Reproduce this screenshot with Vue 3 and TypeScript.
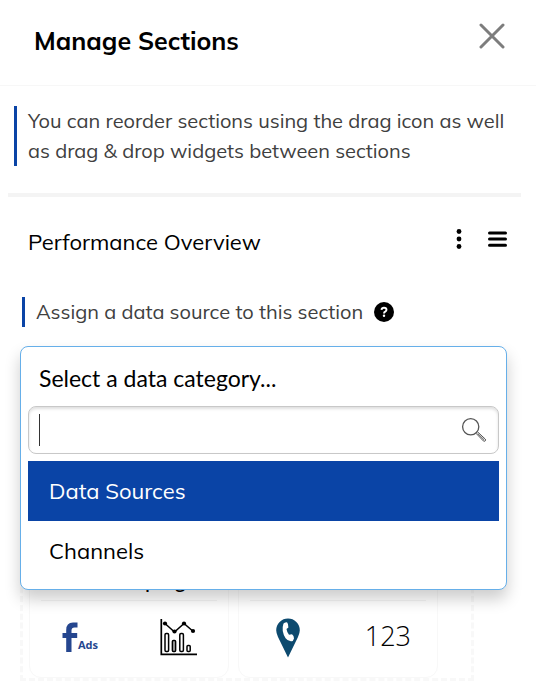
<script setup lang="ts">
import { ref } from 'vue'

interface Option {
  id: string
  label: string
}

const options: Option[] = [
  { id: 'sources', label: 'Data Sources' },
  { id: 'channels', label: 'Channels' },
]

const active = ref('sources')
const query = ref('')
</script>

<template>
  <main class="page">
    <header class="header">
      <h1>Manage Sections</h1>
      <button class="icon-button" type="button" aria-label="Close">
        <svg width="26" height="26" viewBox="0 0 26 26">
          <path d="M2 2 24 24M24 2 2 24" fill="none" stroke="#7d7d7d" stroke-width="3" stroke-linecap="round" />
        </svg>
      </button>
    </header>

    <div class="content">
      <p class="note">You can reorder sections using the drag icon as well as drag &amp; drop widgets between sections</p>

      <section class="section">
        <div class="section-head">
          <h2>Performance Overview</h2>
          <div class="tools">
            <button class="icon-button" type="button" aria-label="More">
              <svg width="6" height="22" viewBox="0 0 6 22">
                <circle cx="3" cy="3.5" r="2.4" />
                <circle cx="3" cy="11" r="2.4" />
                <circle cx="3" cy="18.5" r="2.4" />
              </svg>
            </button>
            <button class="icon-button" type="button" aria-label="Drag">
              <svg width="19" height="22" viewBox="0 0 19 22">
                <path d="M1.5 5H17.5M1.5 11H17.5M1.5 17.3H17.5" stroke="#000" stroke-width="3" stroke-linecap="round" />
              </svg>
            </button>
          </div>
        </div>

        <div class="assign">
          <label class="assign-label" for="category-search">Assign a data source to this section</label>
          <button class="icon-button" type="button" aria-label="Help">
            <svg width="20" height="20" viewBox="0 0 20 20">
              <circle cx="10" cy="10" r="10" />
              <path d="M7.5 7.8Q7.8 5.8 10 5.8Q12.5 5.8 12.5 7.8Q12.5 9 11.2 9.7Q10 10.3 10 11.5" fill="none" stroke="#fff" stroke-width="1.9" />
              <circle cx="10" cy="13.8" r="1.2" fill="#fff" />
            </svg>
          </button>
        </div>

        <div class="picker">
          <div class="dropdown">
            <button class="current" type="button" aria-expanded="true">Select a data category...</button>
            <div class="search">
              <input id="category-search" v-model="query" type="text" autocomplete="off" />
              <span class="caret"></span>
              <svg width="26" height="26" viewBox="0 0 26 26" fill="none" stroke="#555" stroke-width="1.3">
                <circle cx="9.7" cy="9.7" r="8.1" />
                <path d="M15 16.3 22.3 23.9Q23.3 24.8 24.2 23.9Q25.1 23 24.2 22L16.5 14.8M16.6 16.4 23.2 22.9" stroke-width="1" />
              </svg>
            </div>
            <ul class="options" role="listbox" aria-label="Data category">
              <li
                v-for="option in options"
                :key="option.id"
                role="option"
                :aria-selected="active === option.id"
                :class="['option', { active: active === option.id }]"
                @mouseenter="active = option.id"
              >
                {{ option.label }}
              </li>
            </ul>
          </div>
        </div>

        <div class="widgets">
          <article class="card">
            <h3>Ads Campaign</h3>
            <div class="card-body">
              <div class="fb">
                <svg width="16" height="30" viewBox="0 0 16 30">
                  <path d="M4.2 30V16H.5V11H4.2V8Q4.2 .5 11 .5H15.5V5.5H12.5Q9.5 5.5 9.5 8.5V11H15.2V16H9.5V30Z" fill="#25468f" />
                </svg>
                <span>Ads</span>
              </div>
              <svg width="38" height="38" viewBox="0 0 38 38" fill="none" stroke="#000" stroke-width="1.5">
                <path d="M1.3 1V36.4H37" stroke-width="1.7" />
                <path d="M5 5.5 14.5 14 24 5.5 33 13.3" />
                <rect x="5" y="15.5" width="3.6" height="18" rx="1.2" />
                <rect x="12.4" y="22.5" width="3.2" height="11" rx="1" fill="#aaa" />
                <rect x="19.8" y="15.5" width="3.6" height="18" rx="1.2" />
                <rect x="27" y="27.5" width="3.2" height="6" rx="1" />
                <g fill="#000" stroke="none">
                  <circle cx="5" cy="5.5" r="2.1" />
                  <circle cx="14.5" cy="13.5" r="2.1" />
                  <circle cx="24" cy="5.5" r="2.1" />
                  <circle cx="33" cy="13" r="2.1" />
                </g>
              </svg>
            </div>
          </article>
          <article class="card">
            <h3>Calls</h3>
            <div class="card-body">
              <svg width="24" height="40" viewBox="0 0 24 40">
                <path d="M12 .5A11.8 11.8 0 0 0 .2 12.3Q.2 15 2 19L12 39.5 22 19Q23.8 15 23.8 12.3A11.8 11.8 0 0 0 12 .5Z" fill="#0d4a6f" />
                <path d="M7.4 5.8Q8 4.8 9.3 4.4L11 4.3Q12.6 6 12.4 9.4L10.5 11Q11 14.5 13 16.8L16 16.2Q18 17.8 18 20.5L16.8 23Q12.5 24.2 9.6 20.3Q5 13 7.4 5.8Z" fill="#fff" />
              </svg>
              <span class="number">123</span>
            </div>
          </article>
        </div>
      </section>
    </div>
  </main>
</template>

<style>
body {
  margin: 0;
  background: #fff;
}
</style>

<style scoped>
* {
  box-sizing: border-box;
}

.page {
  color: #000;
  font-family: Mulish, Muli, Lato, "Open Sans", sans-serif;
  font-size: 20px;
  line-height: 30px;
}

h1, h2, h3, p, ul {
  margin: 0;
  padding: 0;
}

.icon-button {
  display: flex;
  padding: 0;
  border: 0;
  background: none;
}

.header {
  display: flex;
  justify-content: space-between;
  align-items: flex-start;
  height: 86px;
  margin-right: 2px;
  padding: 23px 31px 0 34px;
  border-bottom: 1px solid #f7f7f7;
}

h1 {
  padding-top: 3px;
  font-size: 25px;
  font-weight: 700;
}

.content {
  padding: 20px 17px 0 8px;
}

.note {
  margin: 0 0 27px 6px;
  padding-left: 11px;
  border-left: 3px solid #0a44a6;
  color: #404040;
}

.section {
  padding: 30px 14px 0 12px;
  border-top: 4px solid #f4f4f4;
}

.section-head {
  display: flex;
  justify-content: space-between;
  padding-left: 8px;
}

h2 {
  font-size: 22px;
  font-weight: 400;
}

.tools {
  display: flex;
  gap: 26px;
  align-items: flex-start;
  padding-top: 1px;
}

.assign {
  display: flex;
  gap: 11px;
  align-items: center;
  margin: 40px 0 19px 2px;
  padding-left: 11px;
  border-left: 3px solid #0a44a6;
  color: #404040;
}

.picker {
  position: relative;
  height: 60px;
}

.dropdown {
  position: absolute;
  top: 0;
  right: 0;
  left: 0;
  padding: 0 7px 8px;
  border: 1px solid #66afe9;
  border-radius: 8px;
  background: #fff;
  box-shadow: 0 9px 16px rgba(0, 0, 0, 0.2);
}

.current {
  display: block;
  width: 100%;
  height: 59px;
  padding: 2px 11px 0;
  border: 0;
  background: none;
  color: #000;
  font-family: Lato, sans-serif;
  font-size: 23px;
  text-align: left;
}

.search {
  position: relative;
}

.search input {
  display: block;
  width: 100%;
  height: 48px;
  padding: 0 50px 0 11px;
  border: 1px solid #c8c8c8;
  border-radius: 8px;
  outline: 0;
  box-shadow: inset 0 2px 3px rgba(0, 0, 0, 0.13);
  font: inherit;
  caret-color: transparent;
}

.caret {
  position: absolute;
  top: 8px;
  left: 11px;
  width: 1px;
  height: 32px;
  background: #333;
}

.search svg {
  position: absolute;
  top: 11px;
  right: 12px;
}

.options {
  padding-top: 7px;
  list-style: none;
}

.option {
  padding: 15px 21px;
  font-size: 22px;
}

.option.active {
  background: #0a44a6;
  color: #fff;
}

.widgets {
  display: flex;
  gap: 9px;
  width: fit-content;
  max-width: 100%;
  margin-top: 120px;
  padding: 10px 33px 0 6px;
  border: 3px dashed #f8f8f8;
}

.card {
  width: 200px;
  padding: 0 11px;
  border: 1px solid #f8f8f8;
  border-radius: 12px;
}

h3 {
  padding: 29px 0 7px;
  border-bottom: 1px solid #f3f3f3;
  font-size: 20px;
  font-weight: 600;
  line-height: 24px;
  text-align: center;
}

.card-body {
  display: flex;
  justify-content: space-between;
  align-items: center;
  height: 76px;
  padding: 0 19px 4px 21px;
}

.card:last-child .card-body {
  padding: 0 15px 2px 26px;
}

.fb {
  display: flex;
  align-items: flex-end;
}

.fb span {
  color: #25468f;
  font-family: "Open Sans", sans-serif;
  font-size: 11px;
  font-weight: 700;
  line-height: 14px;
}

.number {
  padding-bottom: 4px;
  font-family: "Open Sans", sans-serif;
  font-size: 27px;
  font-weight: 300;
}
</style>
